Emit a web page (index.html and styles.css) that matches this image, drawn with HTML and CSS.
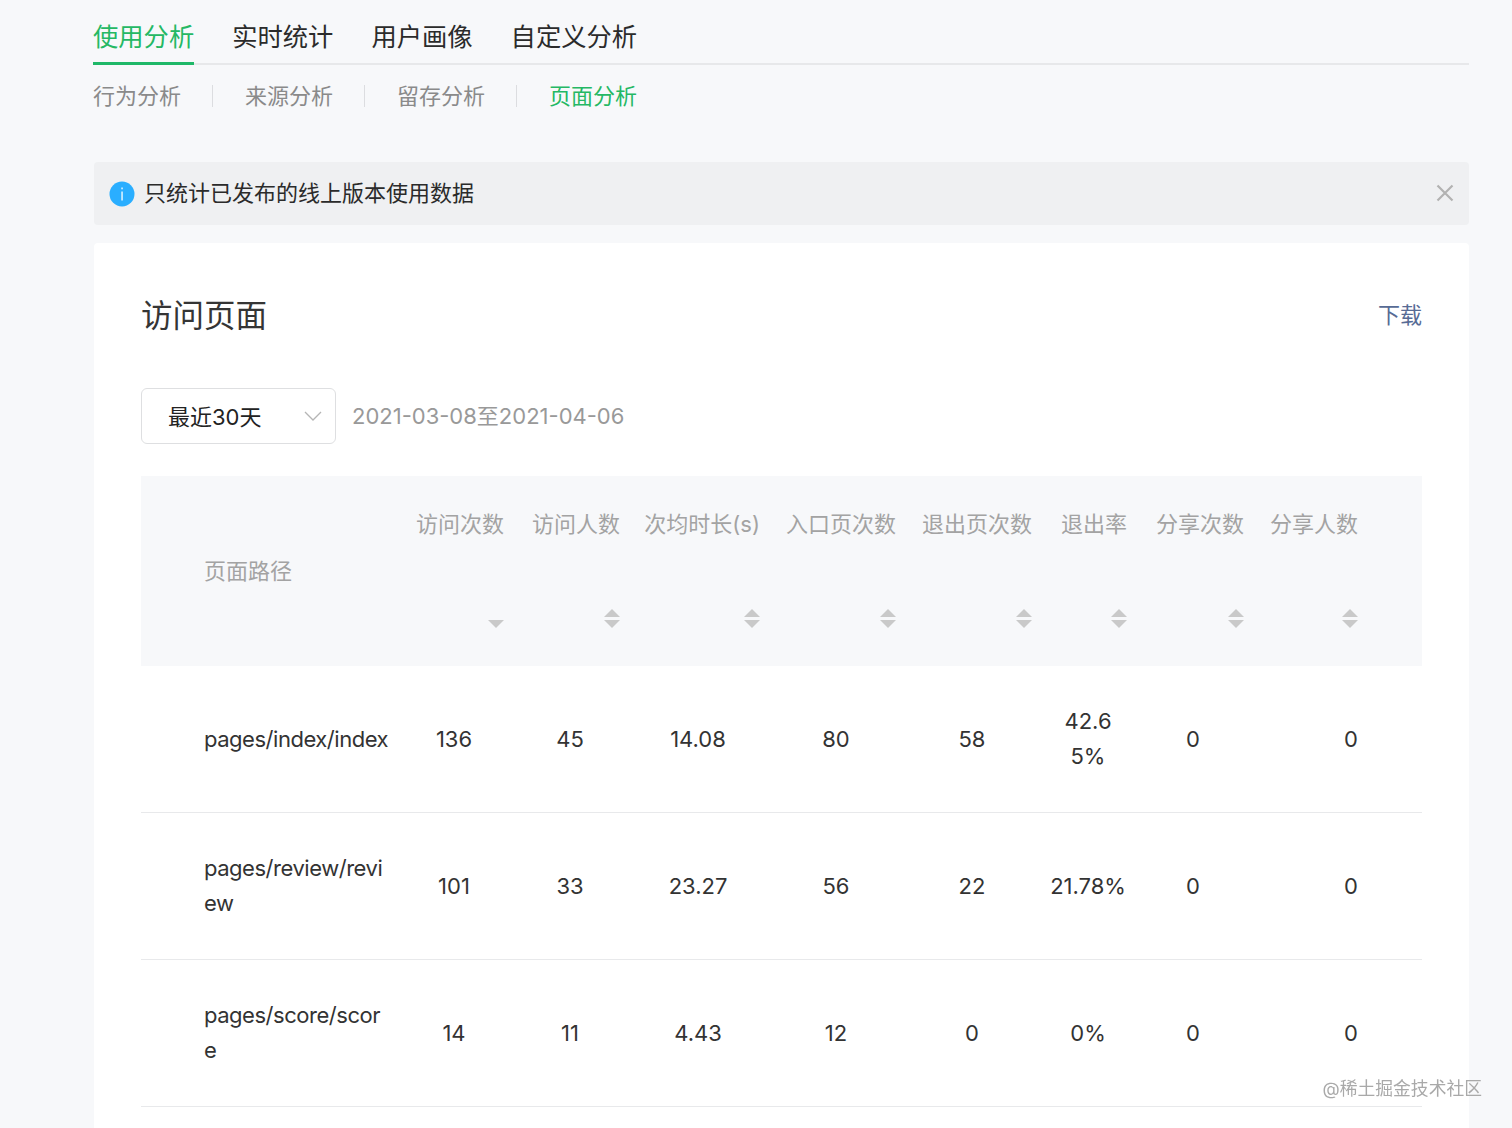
FILE: index.html
```html
<!DOCTYPE html>
<html lang="zh-CN">
<head>
    <meta charset="UTF-8">
    <title>页面分析</title>
    <link rel="stylesheet" href="styles.css">
</head>
<body>
    <div class="page">
        <!-- Top tabs -->
        <div class="tabs">
            <a class="tab active">使用分析</a>
            <a class="tab">实时统计</a>
            <a class="tab">用户画像</a>
            <a class="tab">自定义分析</a>
        </div>

        <div class="subtabs">
            <a class="subtab">行为分析</a>
            <a class="subtab">来源分析</a>
            <a class="subtab">留存分析</a>
            <a class="subtab active">页面分析</a>
        </div>

        <!-- Notice -->
        <div class="notice">
            <svg class="notice-icon" width="26" height="26" viewBox="0 0 26 26">
                <circle cx="13" cy="13" r="12.5" fill="#2aaeff"/>
                <rect x="12.4" y="6.5" width="1.3" height="1.8" fill="#fff"/>
                <rect x="12.4" y="10.5" width="1.3" height="9" fill="#fff"/>
            </svg>
            <span class="notice-text">只统计已发布的线上版本使用数据</span>
            <svg class="notice-close" width="18" height="18" viewBox="0 0 18 18">
                <path d="M1.5 1.5 L16.5 16.5 M16.5 1.5 L1.5 16.5" stroke="#b2b2b2" stroke-width="2.2" fill="none"/>
            </svg>
        </div>

        <!-- Card -->
        <div class="card">
            <div class="card-head">
                <h2>访问页面</h2>
                <a class="download">下载</a>
            </div>

            <div class="filter">
                <div class="select">
                    <span>最近30天</span>
                    <svg width="18" height="10" viewBox="0 0 18 10">
                        <path d="M1 1 L9 9 L17 1" stroke="#b5b5b5" stroke-width="1.3" fill="none"/>
                    </svg>
                </div>
                <span class="date-range">2021-03-08至2021-04-06</span>
            </div>

            <table class="stats">
                <colgroup>
                    <col class="c1"><col class="c2"><col class="c3"><col class="c4"><col class="c5">
                    <col class="c6"><col class="c7"><col class="c8"><col class="c9">
                </colgroup>
                <thead>
                    <tr>
                        <th>页面路径</th>
                        <th><div class="th-inner"><span>访问次数</span>
                            <svg class="sort" width="16" height="20" viewBox="0 0 16 20"><polygon points="0,11 16,11 8,19" fill="#c9c9c9"/></svg>
                        </div></th>
                        <th><div class="th-inner"><span>访问人数</span>
                            <svg class="sort" width="16" height="20" viewBox="0 0 16 20"><polygon points="8,0 16,8 0,8" fill="#c9c9c9"/><polygon points="0,11 16,11 8,19" fill="#c9c9c9"/></svg>
                        </div></th>
                        <th><div class="th-inner"><span>次均时长(s)</span>
                            <svg class="sort" width="16" height="20" viewBox="0 0 16 20"><polygon points="8,0 16,8 0,8" fill="#c9c9c9"/><polygon points="0,11 16,11 8,19" fill="#c9c9c9"/></svg>
                        </div></th>
                        <th><div class="th-inner"><span>入口页次数</span>
                            <svg class="sort" width="16" height="20" viewBox="0 0 16 20"><polygon points="8,0 16,8 0,8" fill="#c9c9c9"/><polygon points="0,11 16,11 8,19" fill="#c9c9c9"/></svg>
                        </div></th>
                        <th><div class="th-inner"><span>退出页次数</span>
                            <svg class="sort" width="16" height="20" viewBox="0 0 16 20"><polygon points="8,0 16,8 0,8" fill="#c9c9c9"/><polygon points="0,11 16,11 8,19" fill="#c9c9c9"/></svg>
                        </div></th>
                        <th><div class="th-inner"><span>退出率</span>
                            <svg class="sort" width="16" height="20" viewBox="0 0 16 20"><polygon points="8,0 16,8 0,8" fill="#c9c9c9"/><polygon points="0,11 16,11 8,19" fill="#c9c9c9"/></svg>
                        </div></th>
                        <th><div class="th-inner"><span>分享次数</span>
                            <svg class="sort" width="16" height="20" viewBox="0 0 16 20"><polygon points="8,0 16,8 0,8" fill="#c9c9c9"/><polygon points="0,11 16,11 8,19" fill="#c9c9c9"/></svg>
                        </div></th>
                        <th><div class="th-inner"><span>分享人数</span>
                            <svg class="sort" width="16" height="20" viewBox="0 0 16 20"><polygon points="8,0 16,8 0,8" fill="#c9c9c9"/><polygon points="0,11 16,11 8,19" fill="#c9c9c9"/></svg>
                        </div></th>
                    </tr>
                </thead>
                <tbody>
                    <tr>
                        <td>pages/index/index</td><td>136</td><td>45</td><td>14.08</td><td>80</td><td>58</td><td>42.65%</td><td>0</td><td>0</td>
                    </tr>
                    <tr>
                        <td>pages/review/review</td><td>101</td><td>33</td><td>23.27</td><td>56</td><td>22</td><td>21.78%</td><td>0</td><td>0</td>
                    </tr>
                    <tr>
                        <td>pages/score/score</td><td>14</td><td>11</td><td>4.43</td><td>12</td><td>0</td><td>0%</td><td>0</td><td>0</td>
                    </tr>
                </tbody>
            </table>
        </div>
    </div>

    <div class="watermark">@稀土掘金技术社区</div>
</body>
</html>
```

FILE: styles.css
```css
/* General */
html, body {
    margin: 0;
    padding: 0;
}

body {
    background-color: #f7f8fa;
    color: #2b2b2b;
    font-family: Inter, "Noto Sans CJK SC", sans-serif;
    font-size: 22px;
}

.page {
    padding: 0 43px 0 94px;
}

/* Tabs */
.tabs {
    display: flex;
    gap: 38px;
    height: 65px;
    box-sizing: border-box;
    border-bottom: 2px solid #e7e8ea;
    margin-left: -1px;
}

.tab {
    box-sizing: border-box;
    height: 65px;
    padding-top: 18px;
    font-size: 25.3px;
    line-height: 38px;
    color: #2b2b2b;
}

.tab.active {
    color: #25b864;
    border-bottom: 3px solid #1fb868;
}

.subtabs {
    display: flex;
    align-items: center;
    height: 22px;
    margin: 20px 0 0 -1px;
}

.subtab {
    color: #8a8a8a;
    line-height: 22px;
    padding-right: 31px;
    margin-right: 32px;
    border-right: 1px solid #dcdde0;
}

.subtab.active {
    color: #25b864;
    border-right: 0;
}

/* Notice */
.notice {
    display: flex;
    align-items: center;
    height: 63px;
    margin-top: 55px;
    padding: 0 15px;
    background-color: #eff0f2;
    border-radius: 4px;
}

.notice-icon {
    margin-right: 9px;
}

.notice-text {
    flex: 1;
    padding-bottom: 6px;
    color: #2b2b2b;
}

.notice-close {
    display: block;
    margin-top: -1px;
}

/* Card */
.card {
    margin-top: 18px;
    padding: 0 47px 21px;
    background-color: #fff;
    border-radius: 4px 4px 0 0;
}

.card-head {
    display: flex;
    justify-content: space-between;
    align-items: center;
    height: 145px;
}

.card-head h2 {
    margin: 0;
    padding-bottom: 6px;
    font-size: 31.5px;
    font-weight: 400;
    color: #353535;
}

.download {
    padding-bottom: 6px;
    color: #576b95;
}

.filter {
    display: flex;
    align-items: center;
    gap: 16px;
}

.select {
    display: flex;
    justify-content: space-between;
    align-items: center;
    box-sizing: border-box;
    width: 195px;
    height: 56px;
    padding: 0 13px 0 26px;
    border: 1px solid #dedfe1;
    border-radius: 6px;
    color: #222;
}

.select span {
    padding-bottom: 3px;
}

.date-range {
    color: #999;
    margin-top: -5px;
}

/* Table */
.stats {
    width: 1281px;
    margin-top: 32px;
    border-collapse: collapse;
    table-layout: fixed;
}

.c1 { width: 249px; }
.c2 { width: 128px; }
.c3 { width: 104px; }
.c4 { width: 152px; }
.c5 { width: 124px; }
.c6 { width: 148px; }
.c7 { width: 84px; }
.c8 { width: 126px; }
.c9 { width: 166px; }

.stats th {
    height: 190px;
    padding: 0;
    background-color: #f7f8fa;
    color: #a3a3a3;
    font-weight: 400;
    line-height: 35px;
    text-align: right;
    vertical-align: middle;
}

.stats th:first-child {
    padding-left: 63px;
    text-align: left;
}

.stats th:nth-child(2) { padding-right: 14px; }
.stats th:nth-child(3) { padding-right: 2px; }
.stats th:nth-child(4) { padding-right: 14px; }
.stats th:nth-child(5) { padding-right: 2px; }
.stats th:nth-child(6) { padding-right: 14px; }
.stats th:nth-child(7) { padding-right: 3px; }
.stats th:nth-child(8) { padding-right: 12px; }
.stats th:nth-child(9) { padding-right: 64px; }

.th-inner {
    display: flex;
    flex-direction: column;
    align-items: flex-end;
    gap: 67px;
    margin-top: -7px;
}

.th-inner span {
    white-space: nowrap;
}

.sort {
    display: block;
}

.stats td {
    height: 146px;
    padding: 0 4px;
    border-bottom: 1px solid #e8e9eb;
    color: #333;
    line-height: 35px;
    text-align: center;
    word-break: break-all;
}

.stats td:first-child {
    padding: 0 0 0 63px;
    letter-spacing: -0.47px;
    text-align: left;
}

.stats td:last-child {
    padding-left: 28px;
}

/* Watermark */
.watermark {
    position: fixed;
    right: 30px;
    bottom: 27px;
    font-size: 17.8px;
    line-height: 24px;
    color: #a9a9a9;
}
```
